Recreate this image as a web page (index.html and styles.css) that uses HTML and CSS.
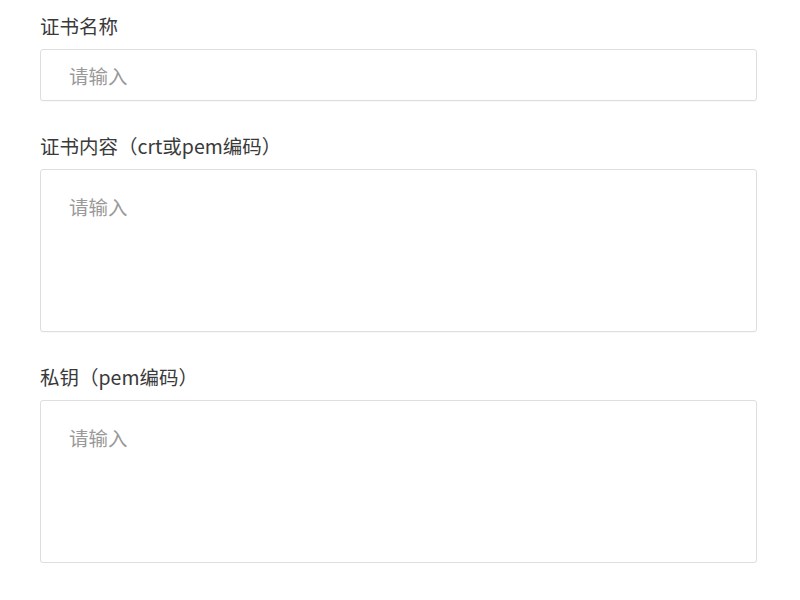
FILE: index.html
```html
<!DOCTYPE html>
<html lang="zh">
<head>
<meta charset="utf-8">
<link rel="stylesheet" href="styles.css">
</head>
<body>
<form class="form">
  <div class="field">
    <label class="label">证书名称</label>
    <input class="control input" type="text" placeholder="请输入">
  </div>
  <div class="field">
    <label class="label">证书内容（crt或pem编码）</label>
    <textarea class="control area" placeholder="请输入"></textarea>
  </div>
  <div class="field">
    <label class="label">私钥（pem编码）</label>
    <textarea class="control area" placeholder="请输入"></textarea>
  </div>
</form>
</body>
</html>
```
FILE: styles.css
```css
html, body {
  margin: 0;
  padding: 0;
  background: #ffffff;
}
body {
  font-family: "Noto Sans CJK SC", "Noto Sans", sans-serif;
  color: #333333;
}
.form {
  display: flex;
  flex-direction: column;
  gap: 32px;
  padding: 13px 43px 0 40px;
}
.field {
  display: flex;
  flex-direction: column;
  gap: 10px;
}
.label {
  font-size: 19.5px;
  line-height: 26px;
  color: #3a3a3a;
}
.control {
  box-sizing: border-box;
  width: 100%;
  margin: 0;
  border: 1px solid #dedede;
  border-radius: 3px;
  background: #ffffff;
  box-shadow: 0 1px 1px rgba(0, 0, 0, 0.03);
  font-family: "Noto Sans CJK SC", "Noto Sans", sans-serif;
  font-size: 19.5px;
  line-height: 26px;
  color: #333;
  outline: none;
  padding: 0 28px;
}
.control::placeholder {
  color: #999999;
}
.input {
  height: 52px;
}
.area {
  height: 163px;
  padding-top: 24px;
  resize: none;
  display: block;
}
```
